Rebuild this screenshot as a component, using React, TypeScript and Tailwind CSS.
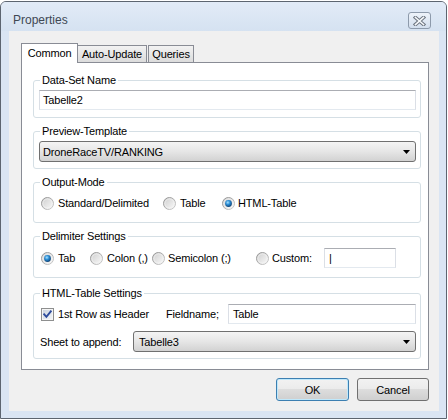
import React from "react";

function Radio({ checked }: { checked?: boolean }) {
  return (
    <svg width="13" height="13" viewBox="0 0 13 13" className="shrink-0 block">
      <defs>
        <linearGradient id="rRing" x1="0" y1="0" x2="1" y2="1">
          <stop offset="0" stopColor="#8c8c8c" />
          <stop offset="1" stopColor="#cfcfcf" />
        </linearGradient>
        <linearGradient id="rFill" x1="0" y1="0" x2="1" y2="1">
          <stop offset="0" stopColor="#cdcdcd" />
          <stop offset="1" stopColor="#fbfbfb" />
        </linearGradient>
        <radialGradient id="rDot" cx="0.4" cy="0.35" r="0.7">
          <stop offset="0" stopColor="#a6e2ff" />
          <stop offset="0.45" stopColor="#2a8cd4" />
          <stop offset="1" stopColor="#0c3a6a" />
        </radialGradient>
      </defs>
      <circle cx="6.5" cy="6.5" r="6" fill="url(#rFill)" stroke="url(#rRing)" strokeWidth="1" />
      <circle cx="6.5" cy="6.5" r="4.6" fill="none" stroke="#f6f6f6" strokeWidth="0.8" opacity="0.7" />
      {checked && <circle cx="6.5" cy="6.5" r="3.4" fill="url(#rDot)" />}
    </svg>
  );
}

function Checkbox() {
  return (
    <svg width="13" height="13" viewBox="0 0 13 13" className="shrink-0 block">
      <defs>
        <linearGradient id="cbFill" x1="0" y1="0" x2="1" y2="1">
          <stop offset="0" stopColor="#cbd3de" />
          <stop offset="1" stopColor="#f1f4f8" />
        </linearGradient>
      </defs>
      <rect x="0.5" y="0.5" width="12" height="12" fill="#f5f5f5" stroke="#8e8f8f" />
      <rect x="2" y="2" width="9" height="9" fill="url(#cbFill)" />
      <path d="M3.2 6.3 L5.4 8.8 L9.8 3.4" stroke="#2c4a9c" strokeWidth="1.9" fill="none" strokeLinecap="square" />
    </svg>
  );
}

function Arrow() {
  return (
    <svg width="7" height="4" viewBox="0 0 7 4" className="block shrink-0">
      <path d="M0 0 H7 L3.5 4 Z" fill="#000" />
    </svg>
  );
}

const btnGrad =
  "bg-[linear-gradient(to_bottom,#f2f2f2_0%,#ebebeb_50%,#dddddd_50%,#cfcfcf_100%)]";
const selGrad = "bg-[linear-gradient(to_bottom,#f4f4f4_0%,#e6e6e6_50%,#d2d2d2_100%)]";
const inputBorder =
  "border border-[#dbdfe6] border-t-[#abadb3] border-b-[#e3e9ef] bg-white";

function Group({ label, children, className = "" }: { label: string; children: React.ReactNode; className?: string }) {
  return (
    <fieldset className={`border border-[#d5dfe5] rounded-[3px] p-0 m-0 min-w-0 ${className}`}>
      <legend className="ml-[6px] px-[2px] leading-[14px] h-[14px]">{label}</legend>
      {children}
    </fieldset>
  );
}

export default function App() {
  return (
    <div className="w-[448px] h-[420px] bg-white pt-[1px] font-['Liberation_Sans',Arial,sans-serif] text-[11px] tracking-[-0.15px] text-black overflow-hidden">
      <div className="w-[447px] h-[418px] border border-[#5d6570] rounded-t-[6px] bg-[#dae5f3] flex flex-col">
        {/* title bar */}
        <div className="h-[29px] shrink-0 flex items-start justify-between pl-[12px] pr-[15px] rounded-t-[5px] bg-[linear-gradient(to_bottom,#e2ebf7,#d5e2f1)]">
          <span className="mt-[11px] text-[12px] leading-[14px] tracking-normal text-[#3f4854]">Properties</span>
          <div className="mt-[10px] w-[23px] h-[17px] rounded-[3px] border border-[#8d9aab] bg-[linear-gradient(to_bottom,#eef3fa,#d3dfee)] flex items-center justify-center">
            <svg width="13" height="10" viewBox="0 0 13 10">
              <path d="M2.5 1.5 L10.5 8.5 M10.5 1.5 L2.5 8.5" stroke="#6d7580" strokeWidth="3.6" strokeLinecap="square" />
              <path d="M2.5 1.5 L10.5 8.5 M10.5 1.5 L2.5 8.5" stroke="#f7f9fb" strokeWidth="1.6" strokeLinecap="square" />
            </svg>
          </div>
        </div>
        {/* client */}
        <div className="flex-1 ml-[8px] mr-[7px] mb-[7px] bg-[#f0f0f0] flex flex-col pt-[12px] pl-[12px] pr-[10px]">
          {/* tabs */}
          <div className="h-[20px] flex items-end relative z-10">
            <div className="w-[57px] h-[20px] bg-white border border-b-0 border-[#898c95] flex items-center justify-center leading-[14px] pb-[1px]">
              Common
            </div>
            <div className="ml-[-1px] w-[70px] h-[17px] mb-[1px] border border-b-0 border-[#898c95] bg-[linear-gradient(to_bottom,#f2f2f2,#dcdcdc)] flex items-center justify-center leading-[14px]">
              Auto-Update
            </div>
            <div className="ml-[1px] w-[46px] h-[17px] mb-[1px] border border-b-0 border-[#898c95] bg-[linear-gradient(to_bottom,#f2f2f2,#dcdcdc)] flex items-center justify-center leading-[14px]">
              Queries
            </div>
          </div>
          {/* panel */}
          <div className="-mt-[1px] border border-[#898c95] bg-white pt-[10px] pb-[10px] pl-[11px] pr-[7px] flex flex-col">
            <Group label="Data-Set Name">
              <div className="pt-[3px] pb-[7px] pl-[5px] pr-[4px]">
                <div className={`h-[20px] ${inputBorder} flex items-center pl-[3px] leading-[14px]`}>Tabelle2</div>
              </div>
            </Group>
            <Group label="Preview-Template" className="mt-[6px]">
              <div className="pt-[3px] pb-[6px] pl-[5px] pr-[4px]">
                <div className={`h-[21px] border border-[#707070] rounded-[3px] ${selGrad} flex items-center justify-between pl-[3px] pr-[5px] leading-[14px]`}>
                  <span>DroneRaceTV/RANKING</span>
                  <Arrow />
                </div>
              </div>
            </Group>
            <Group label="Output-Mode" className="mt-[6px]">
              <div className="pt-[7px] pb-[12px] pl-[7px] flex items-center h-[14px] box-content leading-[14px]">
                <div className="w-[122px] flex items-center gap-[4px]"><Radio /><span>Standard/Delimited</span></div>
                <div className="w-[59px] flex items-center gap-[4px]"><Radio /><span>Table</span></div>
                <div className="flex items-center gap-[2px]"><Radio checked /><span className="ml-[1px]">HTML-Table</span></div>
              </div>
            </Group>
            <Group label="Delimiter Settings" className="mt-[6px]">
              <div className="pt-[5px] pb-[9px] pl-[7px] flex items-center leading-[14px]">
                <div className="w-[49px] flex items-center gap-[4px]"><Radio checked /><span>Tab</span></div>
                <div className="w-[62px] flex items-center gap-[4px]"><Radio /><span>Colon (,)</span></div>
                <div className="w-[104px] flex items-center gap-[3px]"><Radio /><span>Semicolon (;)</span></div>
                <div className="w-[68px] flex items-center gap-[3px]"><Radio /><span>Custom:</span></div>
                <div className={`w-[72px] h-[20px] ${inputBorder} flex items-center pl-[4px]`}>|</div>
              </div>
            </Group>
            <Group label="HTML-Table Settings" className="mt-[8px]">
              <div className="pt-[4px] pb-[6px] pr-[4px] flex flex-col leading-[14px]">
                <div className="flex items-center pl-[7px]">
                  <div className="w-[125px] flex items-center gap-[4px]"><Checkbox /><span>1st Row as Header</span></div>
                  <div className="w-[62px]">Fieldname;</div>
                  <div className={`flex-1 h-[20px] ${inputBorder} flex items-center pl-[4px]`}>Table</div>
                </div>
                <div className="mt-[7px] flex items-center pl-[6px]">
                  <div className="w-[93px]">Sheet to append:</div>
                  <div className={`flex-1 h-[21px] border border-[#707070] rounded-[3px] ${selGrad} flex items-center justify-between pl-[5px] pr-[5px]`}>
                    <span>Tabelle3</span>
                    <Arrow />
                  </div>
                </div>
              </div>
            </Group>
          </div>
          {/* buttons */}
          <div className="mt-[8px] flex justify-end gap-[8px]">
            <div className={`w-[73px] h-[23px] rounded-[3px] border border-[#3c7fb1] shadow-[inset_0_0_0_1px_#bfe8fb] ${btnGrad} flex items-center justify-center leading-[14px]`}>
              OK
            </div>
            <div className={`w-[72px] h-[23px] rounded-[3px] border border-[#707070] ${btnGrad} flex items-center justify-center leading-[14px]`}>
              Cancel
            </div>
          </div>
        </div>
      </div>
    </div>
  );
}
